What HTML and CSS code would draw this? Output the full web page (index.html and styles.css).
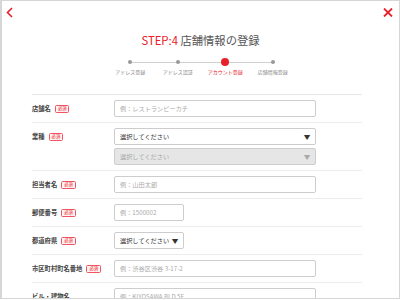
FILE: index.html
```html
<!DOCTYPE html>
<html lang="ja">
<head>
<meta charset="utf-8">
<link rel="stylesheet" href="styles.css">
</head>
<body>
<div class="frame">
  <header class="topbar">
    <svg class="icon-back" width="7" height="11" viewBox="0 0 7 11"><path d="M6 1 L1.5 5.5 L6 10" fill="none" stroke="#e8202a" stroke-width="1.6"/></svg>
    <svg class="icon-close" width="10" height="9" viewBox="0 0 10 9"><path d="M1 0.5 L9 8.5 M9 0.5 L1 8.5" fill="none" stroke="#e8202a" stroke-width="1.8"/></svg>
  </header>
  <h1 class="title"><span class="step">STEP:4</span> 店舗情報の登録</h1>
  <ol class="stepper">
    <li class="st"><span class="dotwrap"><span class="dot"></span></span><span class="lbl">アドレス登録</span></li>
    <li class="st"><span class="dotwrap"><span class="dot"></span></span><span class="lbl">アドレス認証</span></li>
    <li class="st active"><span class="dotwrap"><span class="dot"></span></span><span class="lbl">アカウント登録</span></li>
    <li class="st"><span class="dotwrap"><span class="dot"></span></span><span class="lbl">店舗情報登録</span></li>
  </ol>
  <div class="form">
    <div class="row">
      <div class="label">店舗名<span class="req">必須</span></div>
      <div class="ctrls"><div class="field ph">例：レストランピーカチ</div></div>
    </div>
    <div class="row">
      <div class="label">業種<span class="req">必須</span></div>
      <div class="ctrls">
        <div class="field sel">選択してください<span class="tri">▼</span></div>
        <div class="field sel disabled">選択してください<span class="tri">▼</span></div>
      </div>
    </div>
    <div class="row">
      <div class="label">担当者名<span class="req">必須</span></div>
      <div class="ctrls"><div class="field ph">例：山田太郎</div></div>
    </div>
    <div class="row">
      <div class="label">郵便番号<span class="req">必須</span></div>
      <div class="ctrls"><div class="field ph short">例：1500002</div></div>
    </div>
    <div class="row">
      <div class="label">都道府県<span class="req">必須</span></div>
      <div class="ctrls"><div class="field sel short">選択してください<span class="tri">▼</span></div></div>
    </div>
    <div class="row">
      <div class="label">市区町村町名番地<span class="req">必須</span></div>
      <div class="ctrls"><div class="field ph">例：渋谷区渋谷 3-17-2</div></div>
    </div>
    <div class="row">
      <div class="label">ビル・建物名</div>
      <div class="ctrls"><div class="field ph">例：KIYOSAWA BLD 5F</div></div>
    </div>
  </div>
</div>
</body>
</html>
```

FILE: styles.css
```css
* { box-sizing: border-box; }
html, body { margin: 0; padding: 0; background: #fff; }
body { font-family: "Noto Sans CJK JP", "Noto Sans", sans-serif; color: #333; }

.frame {
  width: 400px;
  height: 299px;
  border: 1px solid #d6d6d6;
  border-left-width: 2px;
  overflow: hidden;
  background: #fff;
}

.topbar {
  height: 22px;
  padding: 5px 6px 0 4px;
  display: flex;
  justify-content: space-between;
  align-items: flex-start;
}
.icon-back { display: block; margin-top: 1px; }
.icon-close { display: block; margin-top: 2px; }

.title {
  margin: 9px 0 0;
  text-align: center;
  font-size: 11.3px;
  line-height: 16px;
  font-weight: normal;
  color: #555;
}
.step { color: #e8202a; }

.stepper {
  list-style: none;
  margin: 10px auto 0;
  padding: 0;
  width: 190px;
  display: flex;
  position: relative;
  transform: translateX(1px);
}
.stepper::before {
  content: "";
  position: absolute;
  left: 24px;
  right: 24px;
  top: 4px;
  height: 1px;
  background: #cfcfcf;
}
.st {
  flex: 1;
  display: flex;
  flex-direction: column;
  align-items: center;
  position: relative;
}
.dotwrap {
  height: 8px;
  display: flex;
  align-items: center;
  justify-content: center;
}
.dot {
  width: 4px;
  height: 4px;
  border-radius: 50%;
  background: #999;
}
.active .dot { width: 8px; height: 8px; background: #e8202a; }
.lbl {
  margin-top: 2px;
  font-size: 5px;
  line-height: 8px;
  color: #888;
  white-space: nowrap;
}
.active .lbl { color: #e8202a; }

.form {
  margin: 18px 37px 0 30px;
  border-top: 1px solid #e6e6e6;
}
.row {
  display: flex;
  padding: 5px 0;
  border-bottom: 1px solid #ececec;
}
.label {
  width: 82px;
  flex: none;
  font-size: 6.3px;
  line-height: 17px;
  font-weight: bold;
  color: #444;
  display: flex;
  align-items: center;
  height: 17px;
}
.req {
  margin-left: 4px;
  font-size: 4.3px;
  line-height: 5px;
  padding: 0.5px 2px;
  border: 1px solid #ee5560;
  border-radius: 1.5px;
  color: #e8202a;
  background: #fff3f3;
  font-weight: normal;
}
.ctrls {
  display: flex;
  flex-direction: column;
  gap: 3px;
}
.field {
  width: 202px;
  height: 17px;
  border: 1px solid #cdcdcd;
  border-radius: 2px;
  padding: 0 5px;
  font-size: 6.2px;
  line-height: 15px;
  color: #333;
  display: flex;
  align-items: center;
  background: #fff;
}
.field.short { width: 70px; }
.ph { color: #aaa; }
.sel { justify-content: space-between; }
.tri { font-size: 6px; color: #333; transform: scaleX(1.1); }
.disabled { background: #e6e6e6; color: #a8a8a8; }
.disabled .tri { color: #aaa; }
```
